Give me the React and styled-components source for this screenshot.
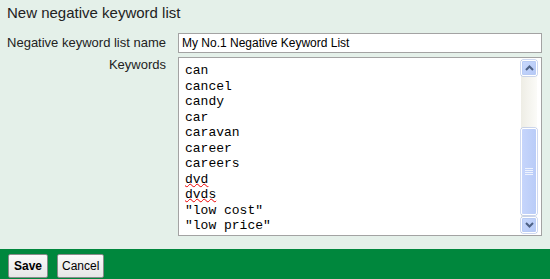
import React from 'react';
import styled, { createGlobalStyle } from 'styled-components';

const GlobalStyle = createGlobalStyle`
    body {
        margin: 0;
        background: #e4f0e9;
        font-family: Arial, "Liberation Sans", sans-serif;
    }
`;

const Page = styled.div`
    display: flex;
    flex-direction: column;
    width: 550px;
    height: 279px;
    overflow: hidden;
`;

const Title = styled.div`
    padding: 4px 7px 0;
    font-size: 15px;
    line-height: 18px;
    color: #222;
`;

const Form = styled.div`
    display: grid;
    grid-template-columns: 159px 364px;
    column-gap: 12px;
    row-gap: 4px;
    margin: 11px 8px 0 7px;
    flex: 1;
    align-content: start;
`;

const Label = styled.div`
    text-align: right;
    font-size: 13px;
    line-height: ${p => p.$lh || '20px'};
    color: #222;
`;

const NameInput = styled.input`
    box-sizing: border-box;
    width: 364px;
    height: 20px;
    border: 1px solid #a3a3a3;
    background: #fff;
    padding: 0 3px;
    font-family: Arial, "Liberation Sans", sans-serif;
    font-size: 12px;
    color: #000;
    outline: none;
`;

const KeywordBox = styled.div`
    box-sizing: border-box;
    height: 179px;
    border: 1px solid #a3a3a3;
    background: #fff;
    display: flex;
`;

const Lines = styled.div`
    flex: 1;
    padding: 5px 0 0 6px;
    font-family: "Liberation Mono", "Courier New", monospace;
    font-size: 13px;
    line-height: 15.5px;
    color: #000;
    white-space: pre;
    overflow: hidden;
`;

const Line = styled.div`
    text-decoration: ${p => (p.$misspelled ? 'underline wavy #e00' : 'none')};
    text-decoration-thickness: 1px;
    text-decoration-skip-ink: none;
    text-underline-offset: 0px;
`;

const Scrollbar = styled.div`
    width: 16px;
    margin: 2px 4px 2px 0;
    display: flex;
    flex-direction: column;
    background: linear-gradient(to right, #eeede5, #fbfbf8);
`;

const ScrollButton = styled.div`
    box-sizing: border-box;
    height: 16px;
    border: 1px solid #fff;
    border-radius: 2px;
    background: linear-gradient(to bottom right, #c8d8fc, #b4c8f6);
    box-shadow: inset 0 0 0 1px #b8cbf4, 0 0 0 0.5px #9fb4e4;
    display: flex;
    align-items: center;
    justify-content: center;
`;

const Track = styled.div`
    flex: 1;
    display: flex;
    flex-direction: column;
    padding-top: 52px;
`;

const Thumb = styled.div`
    box-sizing: border-box;
    height: 87px;
    margin-bottom: 1px;
    border: 1px solid #fff;
    border-radius: 2px;
    background: linear-gradient(to right, #c6d5fb, #b9ccf8);
    box-shadow: 0 0 0 0.5px #9fb4e4;
    display: flex;
    align-items: center;
    justify-content: center;
`;

const Footer = styled.div`
    height: 30px;
    background: #00873d;
    display: flex;
    align-items: flex-start;
    gap: 9px;
    padding: 5px 8px 0;
    box-sizing: border-box;
`;

const Button = styled.button`
    height: 24px;
    padding: 0 ${p => (p.$primary ? '5px' : '4px')};
    border: 1px solid #8a8a8a;
    border-radius: 2px;
    background: linear-gradient(#fafafa, #e6e6e6);
    font-family: Arial, "Liberation Sans", sans-serif;
    font-size: 12px;
    font-weight: ${p => (p.$primary ? 'bold' : 'normal')};
    color: #000;
`;

const Arrow = ({ up }) => (
    <svg width="9" height="6" viewBox="0 0 9 6">
        <path
            d={up ? 'M1 5 L4.5 1.5 L8 5' : 'M1 1 L4.5 4.5 L8 1'}
            fill="none"
            stroke="#4d6185"
            strokeWidth="2"
        />
    </svg>
);

const Grip = () => (
    <svg width="8" height="8" viewBox="0 0 8 8">
        {[0.5, 2.5, 4.5, 6.5].map(y => (
            <line key={y} x1="0" x2="8" y1={y} y2={y} stroke="#eef3fe" strokeWidth="1" />
        ))}
    </svg>
);

const keywords = [
    'can', 'cancel', 'candy', 'car', 'caravan', 'career', 'careers',
    'dvd', 'dvds', '"low cost"', '"low price"',
];
const misspelled = ['dvd', 'dvds'];

const App = () => {
    return (
        <Page>
            <GlobalStyle />
            <Title>New negative keyword list</Title>
            <Form>
                <Label>Negative keyword list name</Label>
                <NameInput defaultValue="My No.1 Negative Keyword List" />
                <Label $lh="16px">Keywords</Label>
                <KeywordBox>
                    <Lines>
                        {keywords.map(k => (
                            <Line key={k} $misspelled={misspelled.includes(k)}>{k}</Line>
                        ))}
                    </Lines>
                    <Scrollbar>
                        <ScrollButton><Arrow up /></ScrollButton>
                        <Track>
                            <Thumb><Grip /></Thumb>
                        </Track>
                        <ScrollButton><Arrow /></ScrollButton>
                    </Scrollbar>
                </KeywordBox>
            </Form>
            <Footer>
                <Button $primary>Save</Button>
                <Button>Cancel</Button>
            </Footer>
        </Page>
    );
};

export default App;
